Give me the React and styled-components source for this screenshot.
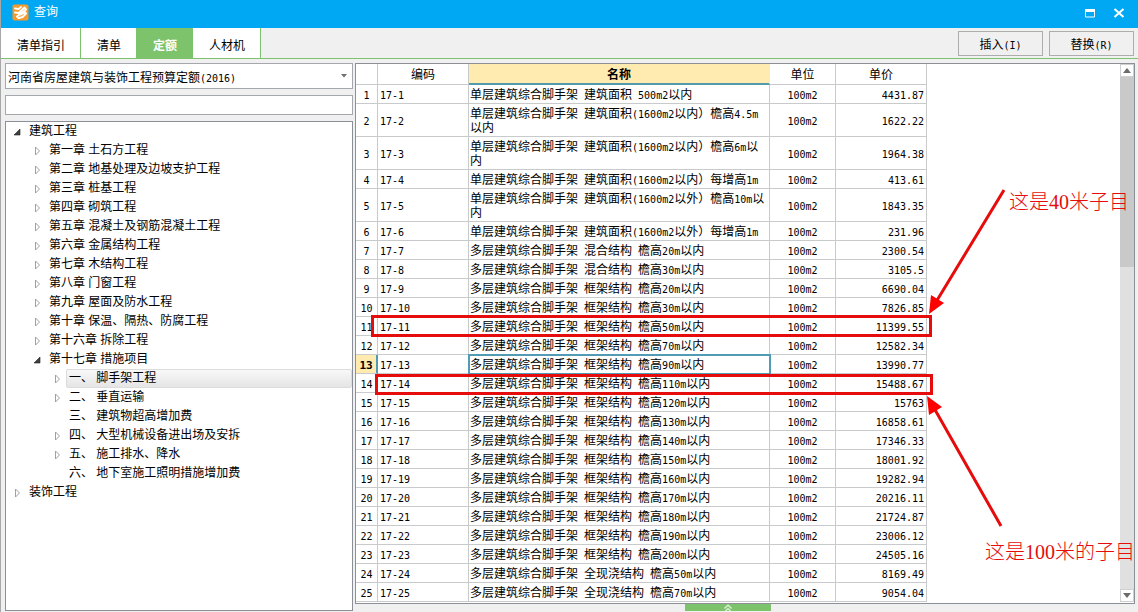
import React from 'react';
import styled, { createGlobalStyle, css } from 'styled-components';

const GlobalStyle = createGlobalStyle`
  *, *::before, *::after { box-sizing: border-box; }
  body { margin: 0; background: #f0f0f0; }
  body, button, input, select, table {
    font-family: "Liberation Sans", "Noto Sans CJK SC", sans-serif;
    font-size: 12px;
    color: #000;
  }
`;

const GREEN = '#7dc36b';
const LINE = '#c8cacc';
const FRAME = '#8a8f98';
const RED = '#e60c0c';

const Window = styled.div`
  display: flex;
  flex-direction: column;
  min-height: 100vh;
  border-left: 1px solid #a8a8a8;
`;

const TitleBar = styled.header`
  display: flex;
  align-items: center;
  gap: 5px;
  height: 28px;
  padding: 0 12px 3px 11px;
  background: #00a8f3;
  color: #fff;
`;

const Title = styled.h1`
  flex: 1;
  margin: 0;
  font-size: 12px;
  line-height: 15px;
  font-weight: 400;
`;

const WindowButton = styled.button`
  display: flex;
  width: 14px;
  height: 14px;
  margin-left: 10px;
  padding: 0;
  border: 0;
  background: none;
`;

const Toolbar = styled.div`
  display: flex;
  align-items: center;
  gap: 6px;
  height: 31px;
  padding-right: 4px;
  border-bottom: 1px solid ${GREEN};
`;

const Tabs = styled.nav`
  display: flex;
  flex: 1;
  align-self: stretch;
`;

const Tab = styled.button`
  padding: 3px 15px 0 16px;
  border: 0;
  border-right: 1px solid ${GREEN};
  background: ${(p) => (p.$active ? GREEN : '#fff')};
  color: ${(p) => (p.$active ? '#fff' : '#000')};
  font-weight: ${(p) => (p.$active ? 700 : 400)};
`;

const Command = styled.button`
  width: 85px;
  height: 25px;
  padding: 0;
  border: 1px solid #adadad;
  background: #f0f0f0;
`;

const Body = styled.main`
  display: flex;
  flex: 1;
  gap: 2px;
  padding: 4px 3px 1px 4px;
`;

const Sidebar = styled.aside`
  display: flex;
  flex-direction: column;
  flex: none;
  gap: 6px;
  width: 348px;
`;

const ComboBox = styled.div`
  display: grid;
  align-items: center;
  height: 26px;
  border: 1px solid #a4a7ab;
  background: #fff;
`;

const ComboText = styled.span`
  grid-area: 1 / 1;
  padding-left: 2px;
  pointer-events: none;
  z-index: 1;
`;

const ComboSelect = styled.select`
  grid-area: 1 / 1;
  width: 100%;
  height: 24px;
  border: 0;
  appearance: none;
  background: #fff;
  color: transparent;
`;

const ComboArrow = styled.svg`
  grid-area: 1 / 1;
  justify-self: end;
  margin-right: 5px;
  pointer-events: none;
  z-index: 1;
`;

const SearchBox = styled.input`
  height: 20px;
  border: 1px solid #a4a7ab;
  background: #fff;
`;

const Tree = styled.ul`
  flex: 1;
  margin: 0;
  padding: 0;
  border: 1px solid ${FRAME};
  background: #fff;
  list-style: none;
`;

const TreeItem = styled.li`
  display: flex;
  align-items: center;
  gap: 4px;
  height: 19px;
  padding-left: ${(p) => 7 + p.$level * 20}px;
`;

const TreeLabel = styled.span`
  flex: 1;
  padding-left: 2px;
  line-height: 17px;
  border: 1px solid transparent;
  white-space: pre;
  ${(p) =>
    p.$selected &&
    css`
      border-color: #dcdcdc;
      border-radius: 2px;
      background: linear-gradient(#f8f8f8, #e5e5e5);
    `}
`;

const Content = styled.section`
  position: relative;
  display: flex;
  flex-direction: column;
  flex: 1;
  min-width: 0;
`;

const GridPanel = styled.div`
  display: flex;
  flex: 1;
  justify-content: space-between;
  border: 1px solid ${FRAME};
  padding-bottom: 1px;
  background: #fff;
`;

const Grid = styled.table`
  align-self: flex-start;
  width: 571px;
  table-layout: fixed;
  border-collapse: separate;
  border-spacing: 0;
`;

const HeadCell = styled.th`
  height: 21px;
  padding: 2px 0 0;
  border-right: 1px solid ${LINE};
  border-bottom: 1px solid ${LINE};
  font-weight: 400;
  line-height: 14px;
  ${(p) =>
    p.$active &&
    css`
      border-right-color: #ffebb0;
      border-bottom: 2px solid #519bab;
      background: #ffebb0;
      font-weight: 700;
    `}
`;

const Half = styled.span`
  font-family: "DejaVu Sans Mono", monospace;
  font-size: 10px;
  line-height: 1;
  white-space: pre-wrap;
`;

const Cell = styled.td`
  padding: 3px 2px 1px;
  padding-left: ${(p) => (p.$align || p.$code ? 2 : 1)}px;
  border-right: 1px solid ${LINE};
  border-bottom: 1px solid ${LINE};
  line-height: 14px;
  text-align: ${(p) => p.$align || 'left'};
  outline: ${(p) => (p.$focused ? '2px solid #519bb5' : 'none')};
  outline-offset: -1px;
`;

const RowNumber = styled.th`
  padding: 3px 0 1px;
  border-right: 1px solid ${LINE};
  border-bottom: 1px solid ${LINE};
  line-height: 14px;
  font-weight: 400;
  ${(p) =>
    p.$active &&
    css`
      border-right: 2px solid #519bb5;
      background: #ffebb0;
      font-weight: 700;
      ${Half} { font-size: 11px; }
    `}
`;

const ScrollBar = styled.div`
  display: flex;
  flex-direction: column;
  width: 14px;
  background: #e0e0e0;
`;

const ScrollButton = styled.button`
  display: flex;
  align-items: center;
  justify-content: center;
  height: 13px;
  padding: 0;
  border: 1px solid #d0d0d0;
  background: #fff;
`;

const ScrollThumb = styled.div`
  height: 190px;
  background: #c9c9c9;
`;

const ScrollSpace = styled.div`
  flex: 1;
`;

const Footer = styled.footer`
  display: flex;
  justify-content: center;
  height: 7px;
  padding-right: 34px;
`;

const Expander = styled.button`
  display: flex;
  justify-content: center;
  width: 86px;
  height: 7px;
  padding: 0;
  border: 0;
  background: ${GREEN};
`;

const Marks = styled.svg`
  position: absolute;
  top: 0;
  left: 0;
  overflow: visible;
  pointer-events: none;
`;

const Note = styled.p`
  position: absolute;
  top: ${(p) => p.$top}px;
  left: ${(p) => p.$left}px;
  margin: 0;
  color: ${RED};
  font-family: "Liberation Serif", "Noto Sans CJK SC", serif;
  font-size: 20px;
  font-weight: 300;
  line-height: 24px;
  white-space: nowrap;
`;

// Sets latin runs at half the width of a Chinese character.
function Mixed({ children }) {
  return String(children)
    .split(/([\x20-\x7e]+)/)
    .map((part, i) => (i % 2 ? <Half key={i}>{part}</Half> : part));
}

const tree = [
  [0, 'open', '建筑工程'],
  [1, 'closed', '第一章 土石方工程'],
  [1, 'closed', '第二章 地基处理及边坡支护工程'],
  [1, 'closed', '第三章 桩基工程'],
  [1, 'closed', '第四章 砌筑工程'],
  [1, 'closed', '第五章 混凝土及钢筋混凝土工程'],
  [1, 'closed', '第六章 金属结构工程'],
  [1, 'closed', '第七章 木结构工程'],
  [1, 'closed', '第八章 门窗工程'],
  [1, 'closed', '第九章 屋面及防水工程'],
  [1, 'closed', '第十章 保温、隔热、防腐工程'],
  [1, 'closed', '第十六章 拆除工程'],
  [1, 'open', '第十七章 措施项目'],
  [2, 'closed', '一、 脚手架工程', true],
  [2, 'closed', '二、 垂直运输'],
  [2, 'leaf', '三、 建筑物超高增加费'],
  [2, 'closed', '四、 大型机械设备进出场及安拆'],
  [2, 'closed', '五、 施工排水、降水'],
  [2, 'leaf', '六、 地下室施工照明措施增加费'],
  [0, 'closed', '装饰工程'],
];

const rows = [
  ['单层建筑综合脚手架 建筑面积 500m2以内', '4431.87'],
  ['单层建筑综合脚手架 建筑面积(1600m2以内）檐高4.5m以内', '1622.22'],
  ['单层建筑综合脚手架 建筑面积(1600m2以内）檐高6m以内', '1964.38'],
  ['单层建筑综合脚手架 建筑面积(1600m2以内）每增高1m', '413.61'],
  ['单层建筑综合脚手架 建筑面积(1600m2以外）檐高10m以内', '1843.35'],
  ['单层建筑综合脚手架 建筑面积(1600m2以外）每增高1m', '231.96'],
  ['多层建筑综合脚手架 混合结构 檐高20m以内', '2300.54'],
  ['多层建筑综合脚手架 混合结构 檐高30m以内', '3105.5'],
  ['多层建筑综合脚手架 框架结构 檐高20m以内', '6690.04'],
  ['多层建筑综合脚手架 框架结构 檐高30m以内', '7826.85'],
  ['多层建筑综合脚手架 框架结构 檐高50m以内', '11399.55'],
  ['多层建筑综合脚手架 框架结构 檐高70m以内', '12582.34'],
  ['多层建筑综合脚手架 框架结构 檐高90m以内', '13990.77'],
  ['多层建筑综合脚手架 框架结构 檐高110m以内', '15488.67'],
  ['多层建筑综合脚手架 框架结构 檐高120m以内', '15763'],
  ['多层建筑综合脚手架 框架结构 檐高130m以内', '16858.61'],
  ['多层建筑综合脚手架 框架结构 檐高140m以内', '17346.33'],
  ['多层建筑综合脚手架 框架结构 檐高150m以内', '18001.92'],
  ['多层建筑综合脚手架 框架结构 檐高160m以内', '19282.94'],
  ['多层建筑综合脚手架 框架结构 檐高170m以内', '20216.11'],
  ['多层建筑综合脚手架 框架结构 檐高180m以内', '21724.87'],
  ['多层建筑综合脚手架 框架结构 檐高190m以内', '23006.12'],
  ['多层建筑综合脚手架 框架结构 檐高200m以内', '24505.16'],
  ['多层建筑综合脚手架 全现浇结构 檐高50m以内', '8169.49'],
  ['多层建筑综合脚手架 全现浇结构 檐高70m以内', '9054.04'],
];

const SELECTED_ROW = 13;

function TreeMark({ state }) {
  return (
    <svg width="9" height="10" viewBox="0 0 9 10" aria-hidden="true">
      {state === 'open' && <path d="M7 2v6H1z" fill="#404040" stroke="#222" strokeWidth="0.6" />}
      {state === 'closed' && <path d="M2.5 1v8l4-4z" fill="#fff" stroke="#a0a0a0" />}
    </svg>
  );
}

export default function App() {
  return (
    <>
      <GlobalStyle />
      <Window>
        <TitleBar>
          <svg width="17" height="17" viewBox="0 0 17 17" aria-hidden="true">
            <rect x="0.5" y="0.5" width="16" height="16" rx="2" fill="#f79a2b" />
            <g fill="none" stroke="#fff" strokeLinecap="round" strokeLinejoin="round">
              <path d="M3 4.500L6.500 5 9 3" strokeWidth="1.800" />
              <path d="M3 8.500L6.500 9 12.500 3.500 14 5.500 5 12.500 6.500 14" strokeWidth="2" />
              <path d="M9 10.500L13 8 14 9.500 10.500 13 7 14" strokeWidth="2" />
            </g>
          </svg>
          <Title>查询</Title>
          <WindowButton aria-label="最大化">
            <svg width="14" height="14" viewBox="0 0 14 14">
              <path d="M2.500 4v7h9V4z" fill="none" stroke="#fff" />
              <path d="M2 3h10v3H2z" fill="#fff" />
            </svg>
          </WindowButton>
          <WindowButton aria-label="关闭">
            <svg width="14" height="14" viewBox="0 0 14 14">
              <path d="M2.500 3l9 8M11.500 3l-9 8" stroke="#fff" strokeWidth="2" />
            </svg>
          </WindowButton>
        </TitleBar>

        <Toolbar>
          <Tabs>
            <Tab>清单指引</Tab>
            <Tab>清单</Tab>
            <Tab $active>定额</Tab>
            <Tab>人材机</Tab>
          </Tabs>
          <Command><Mixed>插入(I)</Mixed></Command>
          <Command><Mixed>替换(R)</Mixed></Command>
        </Toolbar>

        <Body>
          <Sidebar>
            <ComboBox>
              <ComboSelect aria-label="定额库">
                <option aria-label="河南省房屋建筑与装饰工程预算定额(2016)" />
              </ComboSelect>
              <ComboText><Mixed>河南省房屋建筑与装饰工程预算定额(2016)</Mixed></ComboText>
              <ComboArrow width="6" height="4" viewBox="0 0 6 4" aria-hidden="true">
                <path d="M0 0h6L3 3.500z" fill="#707070" />
              </ComboArrow>
            </ComboBox>
            <SearchBox type="text" aria-label="搜索" />
            <Tree>
              {tree.map(([level, state, label, selected]) => (
                <TreeItem key={label} $level={level}>
                  <TreeMark state={state} />
                  <TreeLabel $selected={selected}>{label}</TreeLabel>
                </TreeItem>
              ))}
            </Tree>
          </Sidebar>

          <Content>
            <GridPanel>
              <Grid>
                <colgroup>
                  <col width="22" />
                  <col width="91" />
                  <col width="301" />
                  <col width="66" />
                  <col width="91" />
                </colgroup>
                <thead>
                  <tr>
                    <HeadCell />
                    <HeadCell>编码</HeadCell>
                    <HeadCell $active>名称</HeadCell>
                    <HeadCell>单位</HeadCell>
                    <HeadCell>单价</HeadCell>
                  </tr>
                </thead>
                <tbody>
                  {rows.map(([name, price], i) => (
                    <tr key={name}>
                      <RowNumber scope="row" $active={i + 1 === SELECTED_ROW}>
                        <Mixed>{i + 1}</Mixed>
                      </RowNumber>
                      <Cell $code><Mixed>{`17-${i + 1}`}</Mixed></Cell>
                      <Cell $focused={i + 1 === SELECTED_ROW}><Mixed>{name}</Mixed></Cell>
                      <Cell $align="center"><Mixed>100m2</Mixed></Cell>
                      <Cell $align="right"><Mixed>{price}</Mixed></Cell>
                    </tr>
                  ))}
                </tbody>
              </Grid>
              <ScrollBar>
                <ScrollButton aria-label="向上滚动">
                  <svg width="8" height="5" viewBox="0 0 8 5"><path d="M0 5l4-5 4 5z" fill="#6c6c6c" /></svg>
                </ScrollButton>
                <ScrollThumb />
                <ScrollSpace />
                <ScrollButton aria-label="向下滚动">
                  <svg width="8" height="5" viewBox="0 0 8 5"><path d="M0 0l4 5 4-5z" fill="#6c6c6c" /></svg>
                </ScrollButton>
              </ScrollBar>
            </GridPanel>
            <Footer>
              <Expander aria-label="展开">
                <svg width="10" height="7" viewBox="0 0 10 7">
                  <path d="M1.500 4.500L5 1l3.500 3.500M2.500 7L5 4.500 7.500 7" fill="none" stroke="#e4f4df" strokeWidth="1.200" />
                </svg>
              </Expander>
            </Footer>

            <Marks width="780" height="540" viewBox="355 63 780 540" aria-hidden="true">
              <g fill="none" stroke={RED} strokeWidth="3">
                <rect x="372.500" y="316.500" width="558" height="19" />
                <rect x="376.500" y="375.500" width="555" height="18" />
                <path d="M1004 190L936 302M1001 526L934 408" />
              </g>
              <path d="M929 314l2-19 13 8zM927 396l2 19 13-8z" fill="#f00" />
            </Marks>
            <Note $top={127} $left={654}>这是40米子目</Note>
            <Note $top={477} $left={630}>这是100米的子目</Note>
          </Content>
        </Body>
      </Window>
    </>
  );
}
